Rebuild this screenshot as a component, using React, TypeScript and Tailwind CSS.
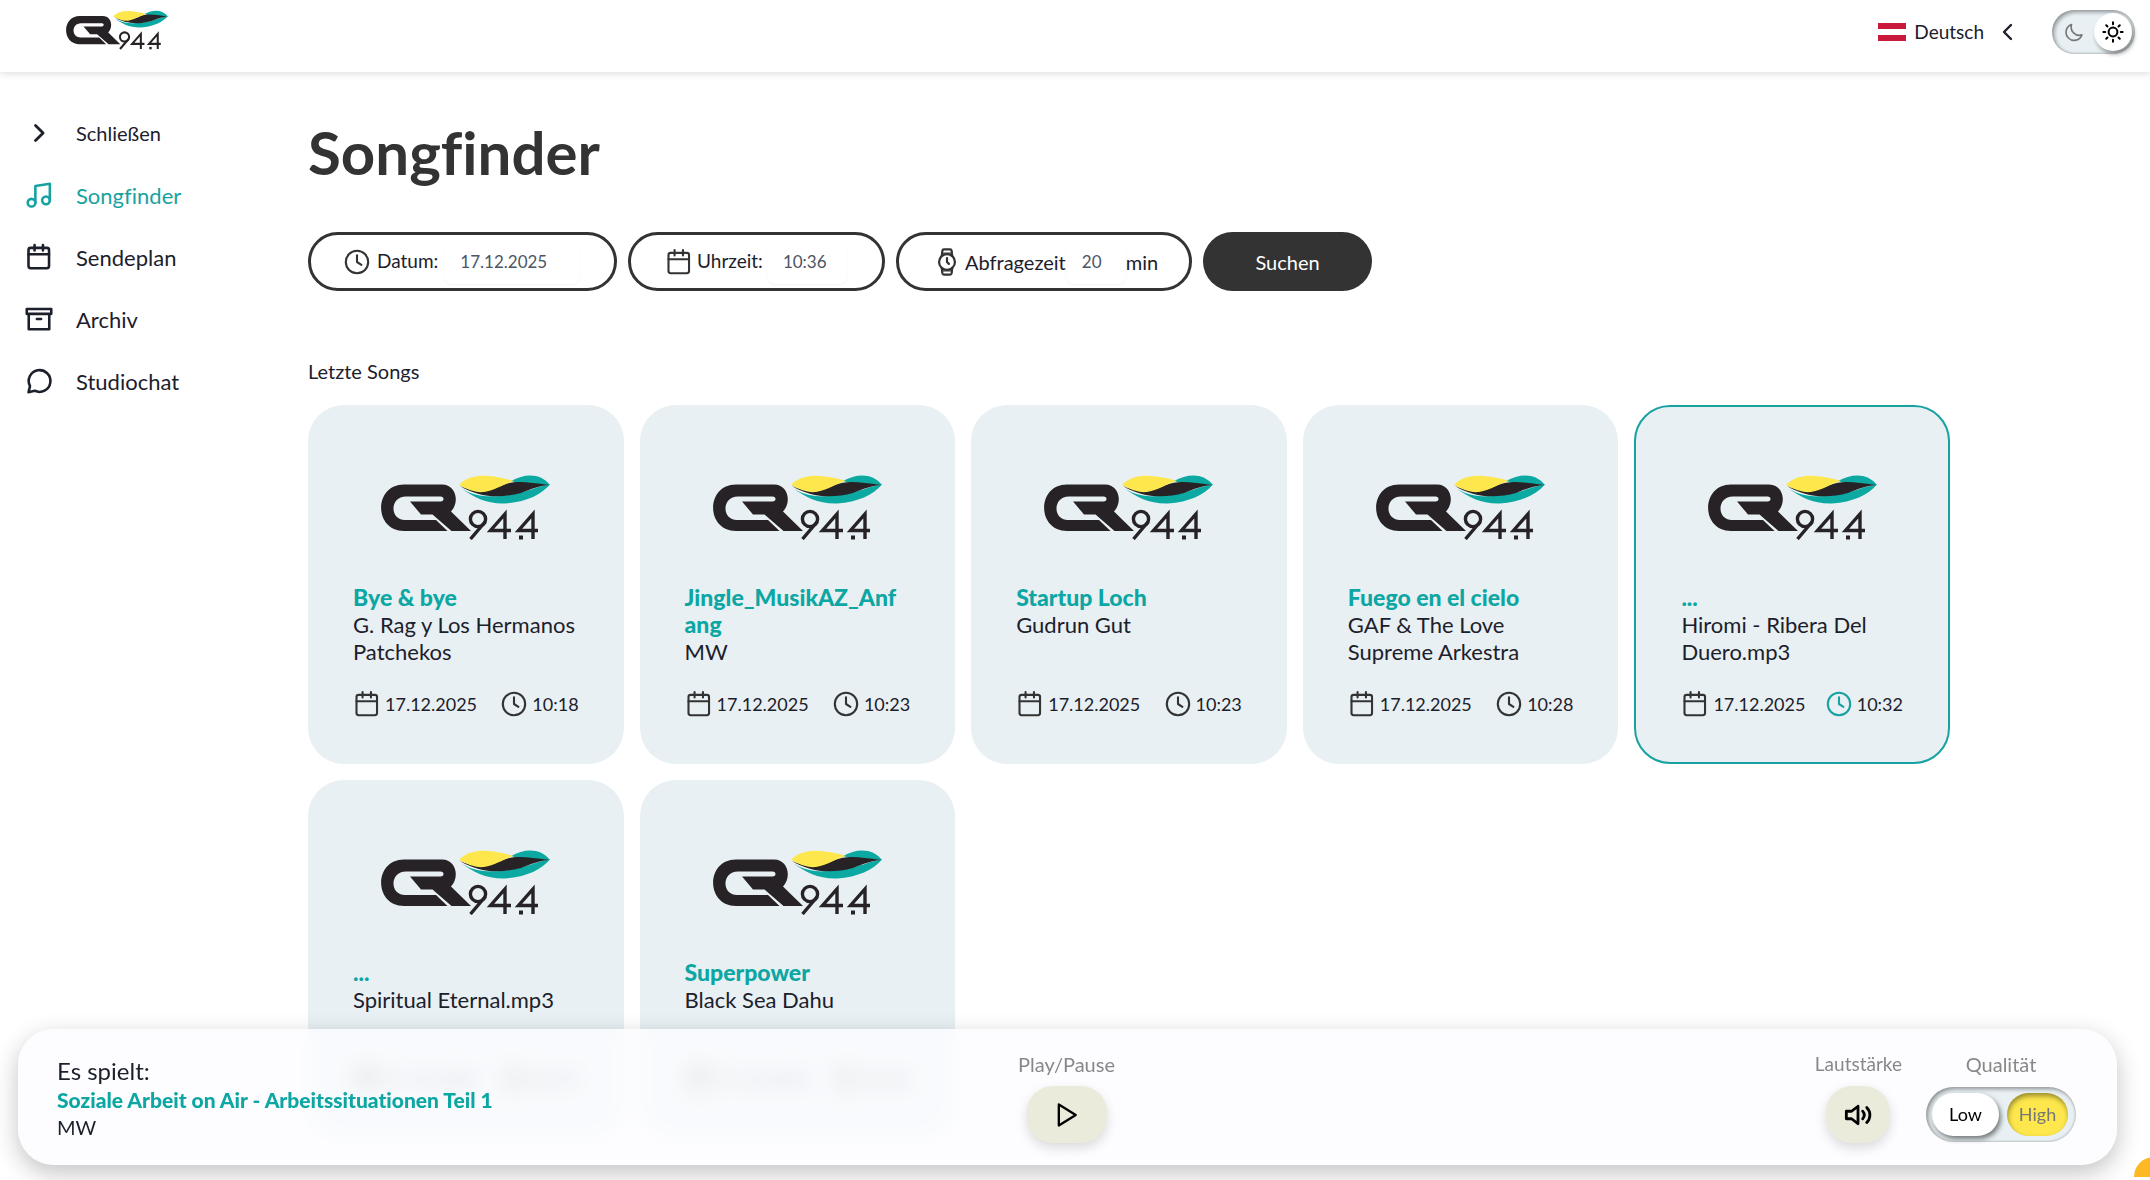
import * as React from 'react';
import { clsx } from 'clsx';

const FLAG_STRIPES = ['bg-[#c8193c]', 'bg-white', 'bg-[#c8193c]'];

interface Song {
    title: string;
    artist: string;
    date: string;
    time: string;
    current?: boolean;
}

const songs: Song[] = [
    { title: 'Bye & bye', artist: 'G. Rag y Los Hermanos Patchekos', date: '17.12.2025', time: '10:18' },
    { title: 'Jingle_MusikAZ_Anfang', artist: 'MW', date: '17.12.2025', time: '10:23' },
    { title: 'Startup Loch', artist: 'Gudrun Gut', date: '17.12.2025', time: '10:23' },
    { title: 'Fuego en el cielo', artist: 'GAF & The Love Supreme Arkestra', date: '17.12.2025', time: '10:28' },
    { title: '...', artist: 'Hiromi - Ribera Del Duero.mp3', date: '17.12.2025', time: '10:32', current: true },
    { title: '...', artist: 'Spiritual Eternal.mp3', date: '17.12.2025', time: '10:37' },
    { title: 'Superpower', artist: 'Black Sea Dahu', date: '17.12.2025', time: '10:42' },
];

function Icon({ className, width = 2, children }: { className?: string; width?: number; children: React.ReactNode }) {
    return (
        <svg
            viewBox="0 0 24 24"
            fill="none"
            stroke="currentColor"
            strokeWidth={width}
            strokeLinecap="round"
            strokeLinejoin="round"
            className={clsx('shrink-0', className)}
            aria-hidden="true"
        >
            {children}
        </svg>
    );
}

const ClockIcon = ({ className }: { className?: string }) => (
    <Icon className={className} width={1.8}>
        <circle cx="12" cy="12" r="9.6" />
        <path d="M12 6.2V12l3.8 2.4" />
    </Icon>
);

const CalendarIcon = ({ className, width = 1.8 }: { className?: string; width?: number }) => (
    <Icon className={className} width={width}>
        <rect x="3" y="4.2" width="17.6" height="17.4" rx="1.8" />
        <path d="M3 9.6h17.6M8.2 1.8v4.6M15.4 1.8v4.6" />
    </Icon>
);

const WatchIcon = ({ className }: { className?: string }) => (
    <Icon className={className} width={1.9}>
        <circle cx="12" cy="12" r="6.8" />
        <path d="M12 8.6V12l1.6 1.6" />
        <path d="M7.6 6.6 8 2.4c.1-.7.6-1.2 1.4-1.2h5.2c.8 0 1.3.5 1.4 1.2l.4 4.2M7.6 17.4l.4 4.2c.1.7.6 1.2 1.4 1.2h5.2c.8 0 1.3-.5 1.4-1.2l.4-4.2" />
        <path d="M9 4.4h6M9 19.6h6" strokeWidth="1.2" />
    </Icon>
);

function Logo({ className }: { className?: string }) {
    return (
        <svg viewBox="0 0 169 65" className={className} role="img" aria-label="CR 94.4">
            <path
                d="M23 9.5H61C75 9.5 79 27 70 36.5L90 56H70.5L51.5 39.5H40L29 26.5H59.5C63.5 26.5 63.5 21.5 59.5 21.5H25C8.5 21.5 8.5 45 24 45H55L66.5 56H23C-7.5 56-7.5 9.5 23 9.5Z"
                fill="#272225"
            />
            <path d="M81 14C98 24 118 22 138 18C150 15 158 11 169 9.5C160 20 145 27 124 28.5C105 29 93 22 81 14Z" fill="#0ca8a2" />
            <path d="M130 6C144-2 160-2 169 10C158 10 145 11 130 6Z" fill="#0ca8a2" />
            <path d="M79 11C96 19 112 15 122 10C133 5 147 7 168 10C157 11 150 14 140 18C118 24 97 22 79 11Z" fill="#272225" />
            <path d="M78 10C90-3 112 0 133 6C124 8 115 15 103 17C94 18 86 14 78 10Z" fill="#fde74c" />
            <g fill="none" stroke="#272225" strokeWidth="3.4">
                <circle cx="97" cy="44" r="7.6" />
                <path d="M104 47 89.5 64M124 64V39L109.5 55.5H130M152 64V39L137.5 55.5H157" />
            </g>
            <path d="M138 60.5h4v4h-4z" fill="#272225" />
        </svg>
    );
}

const navItems = [
    {
        label: 'Songfinder',
        active: true,
        icon: (
            <Icon className="size-7" width={2.2}>
                <circle cx="5.6" cy="18.6" r="3.3" />
                <circle cx="18" cy="16.6" r="3.3" />
                <path d="M8.9 18.6V4.2L21.3 2.4v14.2" />
            </Icon>
        ),
    },
    { label: 'Sendeplan', icon: <CalendarIcon className="size-7" width={2.2} /> },
    {
        label: 'Archiv',
        icon: (
            <Icon className="size-7" width={2.2}>
                <path d="M1.5 3.4h21V7.6h-21zM3.2 7.6v13.2h17.6V7.6M10.2 12h3.6" />
            </Icon>
        ),
    },
    {
        label: 'Studiochat',
        icon: (
            <Icon className="size-7" width={2.2}>
                <path d="M3 21.6 4.3 16.4A9.3 9.3 0 1 1 8.3 20.3Z" />
            </Icon>
        ),
    },
];

function Header() {
    return (
        <header className="flex h-[72px] items-start justify-between pl-[66px] pr-[15px] pt-[10px] shadow-[0_1px_8px_rgba(0,0,0,0.16)]">
            <a href="#start">
                <Logo className="h-[40px] w-[102px]" />
            </a>
            <div className="flex items-center">
                <button type="button" className="flex items-center text-[19px]">
                    <span className="mr-2 flex h-[19px] w-7 flex-col">
                        {FLAG_STRIPES.map((stripe, i) => (
                            <span key={i} className={clsx('flex-1', stripe)} />
                        ))}
                    </span>
                    Deutsch
                    <Icon className="ml-3 size-6" width={2.4}>
                        <path d="m15 5-7 7 7 7" />
                    </Icon>
                </button>
                <button
                    type="button"
                    aria-label="Farbschema wechseln"
                    className="ml-8 flex h-11 w-[83px] items-center justify-between rounded-full bg-[#e8f0f3] pl-3 pr-[3px] shadow-[inset_2px_2px_4px_rgba(0,0,0,0.4),inset_-1px_-1px_2px_rgba(0,0,0,0.15)]"
                >
                    <Icon className="size-5 text-[#777]" width={2}>
                        <path d="M9 3a9.8 9.8 0 1 0 12.5 12.5A10 10 0 0 1 9 3Z" />
                    </Icon>
                    <span className="flex size-[38px] items-center justify-center rounded-full bg-white shadow-[2px_3px_4px_rgba(0,0,0,0.4)]">
                        <Icon className="size-[22px] text-black" width={2.2}>
                            <circle cx="12" cy="12" r="4.8" />
                            <path d="M12 1.5v2M12 20.5v2M1.5 12h2M20.5 12h2M4.6 4.6 6 6M18 18l1.4 1.4M4.6 19.4 6 18M18 6l1.4-1.4" />
                        </Icon>
                    </span>
                </button>
            </div>
        </header>
    );
}

function SearchForm() {
    const pill = 'flex h-[59px] items-center rounded-full border-3 border-[#333]';
    const field = 'h-11 rounded-lg bg-white px-4 text-[17px] text-[#4b5563] shadow-[0_1px_2px_rgba(0,0,0,0.05)]';
    return (
        <form className="mt-[44px] flex gap-[11px] text-[19px]" onSubmit={(e) => e.preventDefault()}>
            <label className={clsx(pill, 'w-[309px] pl-8')}>
                <ClockIcon className="mr-1.5 size-7 text-[#333]" />
                Datum:
                <input className={clsx(field, 'ml-1.5 w-[136px]')} defaultValue="17.12.2025" />
            </label>
            <label className={clsx(pill, 'w-[257px] pl-[34px]')}>
                <CalendarIcon className="mr-1 size-7 text-[#333]" />
                Uhrzeit:
                <input className={clsx(field, 'ml-1 w-20')} defaultValue="10:36" />
            </label>
            <label className={clsx(pill, 'w-[296px] pl-[34px] text-[20px]')}>
                <WatchIcon className="mr-1 size-7 text-[#333]" />
                Abfragezeit
                <input className={clsx(field, 'w-[60px]')} defaultValue="20" />
                min
            </label>
            <button type="submit" className="h-[59px] w-[169px] rounded-full bg-[#333] text-[20px] text-white">
                Suchen
            </button>
        </form>
    );
}

function SongCard({ song }: { song: Song }) {
    return (
        <li
            className={clsx(
                'flex h-[359px] flex-col rounded-[36px] bg-[#e8f0f3] px-[45px]',
                song.current && 'border-2 border-[#17a2a2]',
            )}
        >
            <Logo className={clsx('h-[65px] w-[169px] self-center', song.current ? 'mt-[68px]' : 'mt-[70px]')} />
            <div className="mt-[44px] h-[81px] text-[22px] leading-[27px]">
                <h3 className="break-all pr-2 text-[23px] font-black text-[#0ca6a3]">{song.title}</h3>
                <p>{song.artist}</p>
            </div>
            <div className="mt-[25px] flex items-center justify-between text-[18px]">
                <span className="flex items-center gap-1">
                    <CalendarIcon className="size-7 text-[#333]" />
                    {song.date}
                </span>
                <span className="flex items-center gap-1">
                    <ClockIcon className={clsx('size-7', song.current ? 'text-[#17a2a2]' : 'text-[#333]')} />
                    {song.time}
                </span>
            </div>
        </li>
    );
}

function Player() {
    const round = 'flex h-[57px] items-center justify-center rounded-[26px] bg-[#eaebdb] text-black shadow-[0_5px_12px_rgba(0,0,0,0.14)]';
    return (
        <footer className="fixed bottom-[15px] left-[18px] right-[33px] flex h-[136px] justify-between rounded-[36px] bg-[#fcfcff]/80 pl-[39px] pr-[41px] shadow-[0_8px_24px_rgba(0,0,0,0.24)] backdrop-blur-[10px]">
            <div className="flex-1 pt-[26px]">
                <p className="text-[24px] leading-[31px]">Es spielt:</p>
                <p className="text-[21px] font-black leading-[27px] text-[#0ca6a3]">Soziale Arbeit on Air - Arbeitssituationen Teil 1</p>
                <p className="text-[20px] leading-[28px]">MW</p>
            </div>
            <div className="flex flex-col items-center pt-[21px] text-[#888]">
                <span className="text-[20px] leading-[28px]">Play/Pause</span>
                <button type="button" aria-label="Play/Pause" className={clsx(round, 'mt-2 w-20')}>
                    <Icon className="size-7">
                        <path d="M5 3 19.5 12 5 21Z" />
                    </Icon>
                </button>
            </div>
            <div className="flex flex-1 justify-end gap-6 pt-[21px] text-[#888]">
                <div className="flex flex-col items-center">
                    <span className="text-[19px] leading-[28px]">Lautstärke</span>
                    <button type="button" aria-label="Lautstärke" className={clsx(round, 'mt-2 w-16')}>
                        <Icon className="size-7" width={2.4}>
                            <path d="M12 4.5 6.5 8.8H2v6.4h4.5l5.5 4.3ZM16 8.7c1.7 2 1.7 4.6 0 6.6M19.5 5.5c3.6 3.8 3.6 9.2 0 13" />
                        </Icon>
                    </button>
                </div>
                <div className="flex flex-col items-center">
                    <span className="text-[20px] leading-[28px]">Qualität</span>
                    <div className="mt-[9px] flex h-[55px] w-[150px] items-center justify-between rounded-full bg-[#e8f0f3] pl-1.5 pr-2 text-[18px] shadow-[inset_2px_2px_4px_rgba(0,0,0,0.4),inset_-1px_-1px_2px_rgba(0,0,0,0.12)]">
                        <button type="button" className="h-[43px] w-[67px] rounded-full bg-white text-black shadow-[2px_3px_5px_rgba(0,0,0,0.5)]">
                            Low
                        </button>
                        <button type="button" className="h-[43px] w-[61px] rounded-full bg-[#fde74c] text-[#777] shadow-[inset_1px_3px_5px_rgba(0,0,0,0.4)]">
                            High
                        </button>
                    </div>
                </div>
            </div>
        </footer>
    );
}

export default function App() {
    return (
        <div className="h-screen overflow-hidden bg-white font-[Lato,'Open_Sans',sans-serif] text-[#1c202b] [font-variant-ligatures:none]">
            <Header />
            <div className="flex pr-[200px]">
                <nav className="w-[308px] shrink-0 pl-[25px] pt-[30px]">
                    <ul>
                        <li>
                            <button type="button" className="flex h-[62px] items-center gap-[23px] text-[20px]">
                                <Icon className="size-7" width={2.4}>
                                    <path d="m9 5.5 6.5 6.5L9 18.5" />
                                </Icon>
                                Schließen
                            </button>
                        </li>
                        {navItems.map((item) => (
                            <li key={item.label}>
                                <a
                                    href={`#${item.label.toLowerCase()}`}
                                    className={clsx('flex h-[62px] items-center gap-[23px] text-[22px]', item.active && 'text-[#17a2a2]')}
                                >
                                    {item.icon}
                                    {item.label}
                                </a>
                            </li>
                        ))}
                    </ul>
                </nav>
                <main className="min-w-0 flex-1 pt-[44px]">
                    <h1 className="text-[60px] font-bold leading-[72px] text-[#333]">Songfinder</h1>
                    <SearchForm />
                    <h2 className="mt-[66px] text-[20px] leading-[28px]">Letzte Songs</h2>
                    <ul className="mt-[20px] grid grid-cols-5 gap-4">
                        {songs.map((song, i) => (
                            <SongCard key={i} song={song} />
                        ))}
                    </ul>
                </main>
            </div>
            <Player />
            <button type="button" aria-label="Feedback" className="fixed -right-6 bottom-[3px] h-5 w-10 rounded-t-full bg-[#fdb924]" />
        </div>
    );
}
